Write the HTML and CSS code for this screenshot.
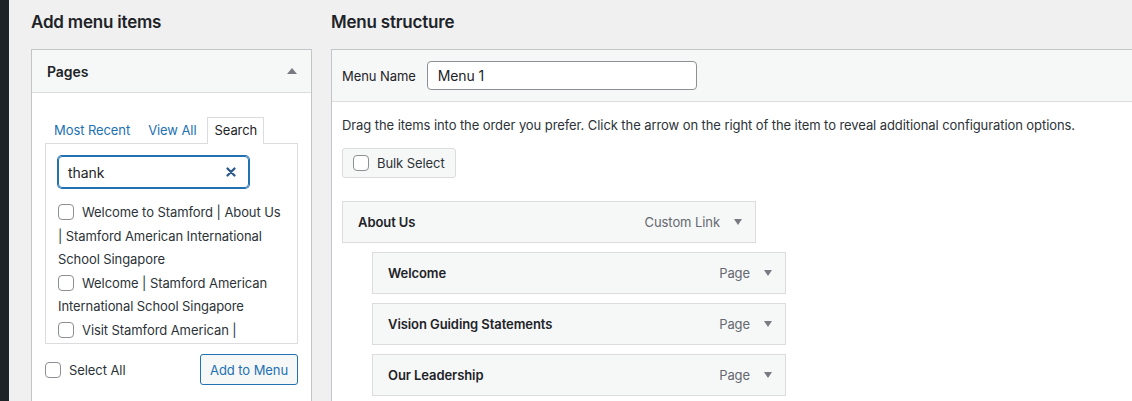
FILE: index.html
```html
<!DOCTYPE html>
<html lang="en">
<head>
<meta charset="utf-8">
<title>Menus</title>
<link rel="stylesheet" href="styles.css">
</head>
<body>
<div class="layout">
  <div class="adminbar"></div>
  <div class="content">
    <section class="col-left">
      <h2 class="heading">Add menu items</h2>
      <div class="panel">
        <div class="panel-head">
          <span class="panel-title">Pages</span>
          <span class="tri-up"></span>
        </div>
        <div class="panel-body">
          <div class="tabs">
            <span class="tab">Most Recent</span>
            <span class="tab">View All</span>
            <span class="tab active">Search</span>
          </div>
          <div class="tab-panel">
            <div class="search">
              <span class="search-text">thank</span>
              <svg class="clear" width="10" height="10" viewBox="0 0 10 10"><path d="M1.5 1.5 L8.5 8.5 M8.5 1.5 L1.5 8.5" stroke="#2c5a8a" stroke-width="2.3" stroke-linecap="round"/></svg>
            </div>
            <ul class="results">
              <li><span class="cb"></span>Welcome to Stamford | About Us | Stamford American International School Singapore</li>
              <li><span class="cb"></span>Welcome | Stamford American International School Singapore</li>
              <li><span class="cb"></span>Visit Stamford American |</li>
            </ul>
          </div>
          <div class="panel-foot">
            <span class="select-all"><span class="cb"></span><span>Select All</span></span>
            <span class="btn-blue">Add to Menu</span>
          </div>
        </div>
      </div>
    </section>
    <section class="col-right">
      <h2 class="heading">Menu structure</h2>
      <div class="menu-box">
        <div class="menu-head">
          <span class="label">Menu Name</span>
          <span class="name-input">Menu 1</span>
        </div>
        <div class="menu-body">
          <p class="hint">Drag the items into the order you prefer. Click the arrow on the right of the item to reveal additional configuration options.</p>
          <span class="btn-bulk"><span class="cb"></span>Bulk Select</span>
          <ul class="items">
            <li class="item"><span class="item-title">About Us</span><span class="item-type">Custom Link</span><span class="tri-down"></span></li>
            <li class="item sub"><span class="item-title">Welcome</span><span class="item-type">Page</span><span class="tri-down"></span></li>
            <li class="item sub"><span class="item-title">Vision Guiding Statements</span><span class="item-type">Page</span><span class="tri-down"></span></li>
            <li class="item sub"><span class="item-title">Our Leadership</span><span class="item-type">Page</span><span class="tri-down"></span></li>
          </ul>
        </div>
      </div>
    </section>
  </div>
</div>
</body>
</html>
```
FILE: styles.css
```css
* { box-sizing: border-box; }
html, body { margin: 0; padding: 0; height: 100%; overflow: hidden; }
body {
  background: #f0f0f1;
  font-family: Inter, "Noto Sans", "Liberation Sans", sans-serif;
  font-size: 13px;
  letter-spacing: -0.08px;
  color: #1d2327;
}
.layout { display: flex; height: 401px; overflow: hidden; }
.adminbar { width: 9px; flex: none; background: #1d2327; }
.content { display: flex; gap: 19px; padding-left: 22px; flex: 1; min-width: 0; }
.heading {
  margin: 0;
  font-size: 17px;
  font-weight: 600;
  letter-spacing: -0.2px;
  line-height: 22px;
  padding-top: 11px;
  height: 49px;
  color: #1d2327;
}
.col-left { width: 281px; flex: none; }
.col-right { flex: 1; min-width: 0; }
.panel {
  border: 1px solid #c3c4c7;
  border-bottom: none;
  background: #fff;
  height: 352px;
}
.panel-head {
  display: flex;
  align-items: center;
  justify-content: space-between;
  height: 43px;
  background: #f6f7f7;
  border-bottom: 1px solid #dcdcde;
  padding: 0 14px 0 15px;
}
.panel-title { font-size: 14px; font-weight: 600; }
.tri-up {
  width: 0; height: 0;
  border-left: 5px solid transparent;
  border-right: 5px solid transparent;
  border-bottom: 6px solid #787c82;
}
.panel-body { padding: 25px 13px 0 13px; }
.tabs { display: flex; align-items: flex-end; padding-left: 9px; height: 25px; }
.tab { color: #2271b1; margin-right: 18px; padding-bottom: 5px; }
.tab.active {
  color: #1d2327;
  background: #fff;
  border: 1px solid #dcdcde;
  border-bottom: none;
  padding: 4px 6px 6px 7px;
  margin-right: 0;
  margin-left: -8px;
  position: relative;
  top: 1px;
}
.tab-panel {
  border: 1px solid #dcdcde;
  height: 201px;
  overflow: hidden;
  padding: 12px 12px 0 12px;
}
.search {
  width: 191px;
  height: 32px;
  border: 1px solid #2271b1;
  box-shadow: 0 0 0 1px #2271b1;
  border-radius: 4px;
  display: flex;
  align-items: center;
  justify-content: space-between;
  padding: 0 12px 0 9px;
  font-size: 14px;
}
.clear { display: block; }
.results { list-style: none; margin: 13px 0 0 0; padding: 0; width: 228px; line-height: 23.5px; color: #2c3338; }
.cb {
  display: inline-block;
  flex: none;
  width: 16px; height: 16px;
  border: 1px solid #8c8f94;
  border-radius: 4px;
  background: #fff;
  vertical-align: -3px;
  margin-right: 8px;
}
.panel-foot {
  display: flex;
  justify-content: space-between;
  align-items: center;
  margin-top: 10px;
}
.select-all { display: flex; align-items: center; color: #2c3338; }
.btn-blue {
  display: inline-flex;
  align-items: center;
  height: 31px;
  padding: 0 9px;
  border: 1px solid #2271b1;
  border-radius: 3px;
  background: #f6f7f7;
  color: #2271b1;
}
.menu-box {
  border: 1px solid #c3c4c7;
  border-right: none;
  border-bottom: none;
  background: #fff;
  height: 352px;
}
.menu-head {
  height: 52px;
  background: #f6f7f7;
  border-bottom: 1px solid #dcdcde;
  display: flex;
  align-items: center;
  padding-left: 10px;
}
.label { margin-right: 11px; }
.name-input {
  width: 270px;
  height: 29px;
  border: 1px solid #8c8f94;
  border-radius: 4px;
  background: #fff;
  font-size: 14px;
  display: flex;
  align-items: center;
  padding-left: 10px;
}
.menu-body { padding: 13px 10px 0 10px; }
.hint { margin: 0; line-height: 20px; color: #2c3338; }
.btn-bulk {
  display: inline-flex;
  align-items: center;
  margin-top: 13px;
  height: 30px;
  padding: 0 10px;
  border: 1px solid #dcdcde;
  border-radius: 3px;
  background: #f6f7f7;
  color: #2c3338;
}
.items { list-style: none; margin: 23px 0 0 0; padding: 0; }
.item {
  width: 414px;
  height: 42px;
  margin-bottom: 9px;
  border: 1px solid #dcdcde;
  background: #f6f7f7;
  display: flex;
  align-items: center;
  padding: 0 13px 0 15px;
}
.item.sub { margin-left: 30px; }
.item-title { font-weight: 600; flex: 1; }
.item-type { color: #646970; margin-right: 14px; }
.tri-down {
  width: 0; height: 0;
  border-left: 4px solid transparent;
  border-right: 4px solid transparent;
  border-top: 6px solid #787c82;
}
```
